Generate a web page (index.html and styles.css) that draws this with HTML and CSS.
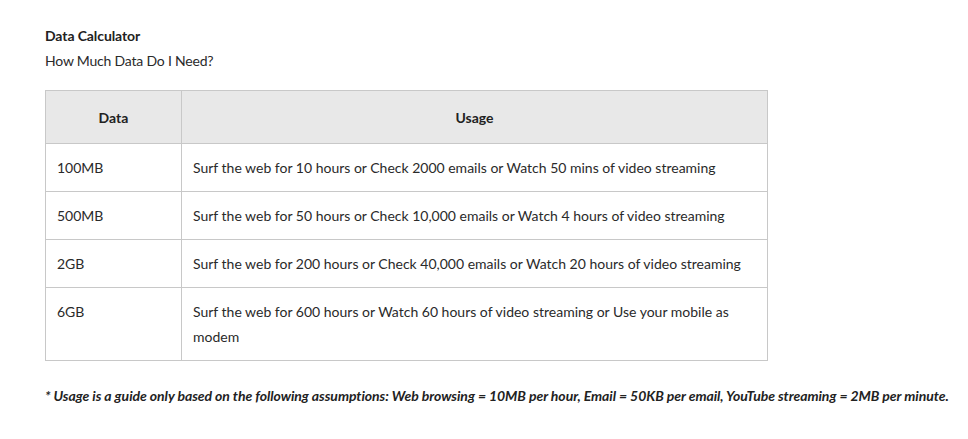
FILE: index.html
```html
<!DOCTYPE html>
<html lang="en">
<head>
<meta charset="utf-8">
<title>Data Calculator</title>
<link rel="stylesheet" href="styles.css">
</head>
<body>
<main class="page">
  <h2 class="title">Data Calculator</h2>
  <p class="subtitle">How Much Data Do I Need?</p>
  <table class="calc">
    <thead>
      <tr><th class="col-data">Data</th><th>Usage</th></tr>
    </thead>
    <tbody>
      <tr><td>100MB</td><td>Surf the web for 10 hours or Check 2000 emails or Watch 50 mins of video streaming</td></tr>
      <tr><td>500MB</td><td>Surf the web for 50 hours or Check 10,000 emails or Watch 4 hours of video streaming</td></tr>
      <tr><td>2GB</td><td>Surf the web for 200 hours or Check 40,000 emails or Watch 20 hours of video streaming</td></tr>
      <tr><td>6GB</td><td>Surf the web for 600 hours or Watch 60 hours of video streaming or Use your mobile as modem</td></tr>
    </tbody>
  </table>
  <p class="note">* Usage is a guide only based on the following assumptions: Web browsing = 10MB per hour, Email = 50KB per email, YouTube streaming = 2MB per minute.</p>
</main>
</body>
</html>
```
FILE: styles.css
```css
html, body {
  margin: 0;
  padding: 0;
  background: #ffffff;
}
body {
  font-family: Lato, "Noto Sans", sans-serif;
  font-size: 14px;
  color: #2a2a2a;
}
.page {
  padding: 26px 0 0 45px;
}
.title {
  margin: 0;
  font-size: 14px;
  font-weight: bold;
  line-height: 20px;
  color: #222222;
  letter-spacing: -0.1px;
}
.subtitle {
  margin: 5px 0 0;
  line-height: 20px;
  letter-spacing: -0.2px;
}
.calc {
  margin-top: 19px;
  width: 723px;
  border-collapse: collapse;
  border: 1px solid #c8c8c8;
}
.calc th {
  background: #e8e8e8;
  font-weight: bold;
  text-align: center;
  line-height: 25px;
  padding: 14px 11px 13px;
  border-left: 1px solid #c8c8c8;
  color: #222222;
}
.calc th.col-data {
  width: 113px;
}
.calc td {
  line-height: 25px;
  padding: 11px 11px;
  border: 1px solid #c8c8c8;
  vertical-align: top;
}
.note {
  margin: 25px 0 0;
  font-style: italic;
  font-weight: bold;
  font-size: 14px;
  line-height: 20px;
  color: #222222;
  letter-spacing: -0.05px;
}
```
